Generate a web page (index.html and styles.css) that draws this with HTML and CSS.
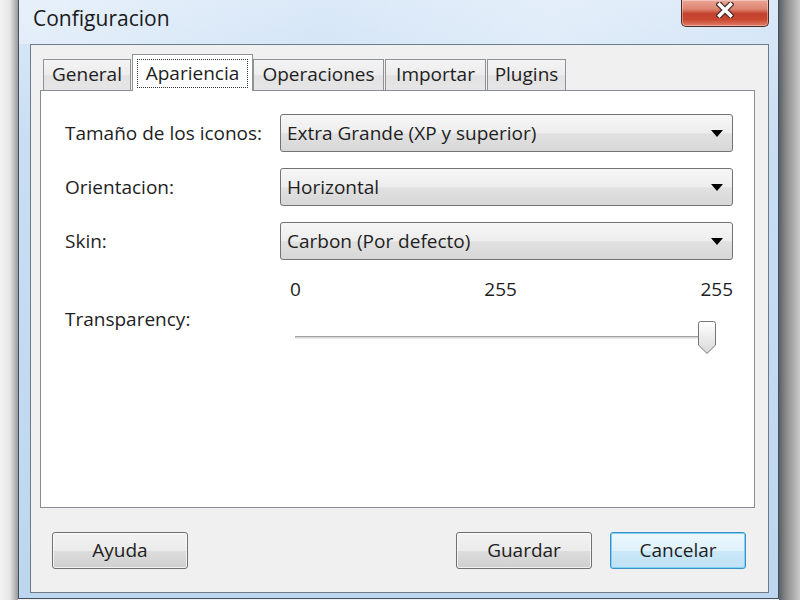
FILE: index.html
```html
<!DOCTYPE html>
<html lang="es">

<head>
	<meta charset="UTF-8" />
	<meta name="viewport" content="width=device-width, initial-scale=1.0" />
	<title>Configuracion</title>
	<link rel="stylesheet" href="styles.css">
</head>

<body>
	<div class="screen">
		<div class="shade-left"></div>

		<div class="window">
			<div class="titlebar">
				<span class="title">Configuracion</span>
				<div class="close">
					<svg width="18" height="16" viewBox="0 0 18 16">
						<path d="M3.5 2.5 L14.5 13.5 M14.5 2.5 L3.5 13.5" stroke="#4a2f2c" stroke-width="6" stroke-linecap="square" />
						<path d="M3.5 2.5 L14.5 13.5 M14.5 2.5 L3.5 13.5" stroke="#ffffff" stroke-width="3.4" stroke-linecap="square" />
					</svg>
				</div>
			</div>

			<div class="client">
				<!-- tabs -->
				<div class="tab-row">
					<div class="tab t-general">General</div>
					<div class="tab active t-apariencia"><span class="focus">Apariencia</span></div>
					<div class="tab t-operaciones">Operaciones</div>
					<div class="tab t-importar">Importar</div>
					<div class="tab t-plugins">Plugins</div>
				</div>

				<div class="panel">
					<div class="form">
						<div class="label">Tamaño de los iconos:</div>
						<div class="combo"><span>Extra Grande (XP y superior)</span><i class="arrow"></i></div>

						<div class="label">Orientacion:</div>
						<div class="combo"><span>Horizontal</span><i class="arrow"></i></div>

						<div class="label">Skin:</div>
						<div class="combo"><span>Carbon (Por defecto)</span><i class="arrow"></i></div>
					</div>

					<div class="slider-block">
						<div></div>
						<div class="ticks">
							<span>0</span>
							<span>255</span>
							<span>255</span>
						</div>
						<div class="label slider-label">Transparency:</div>
						<div class="slider">
							<div class="track"></div>
							<svg class="thumb" width="20" height="35" viewBox="0 0 20 35">
								<defs>
									<linearGradient id="thumbFill" x1="0" y1="0" x2="0" y2="1">
										<stop offset="0" stop-color="#ffffff" />
										<stop offset="1" stop-color="#d9d9d9" />
									</linearGradient>
								</defs>
								<path d="M1.5 3.5 Q1.5 1.5 3.5 1.5 H16.5 Q18.5 1.5 18.5 3.5 V25 L10 33.5 L1.5 25 Z" fill="url(#thumbFill)" stroke="#767676" />
							</svg>
						</div>
					</div>
				</div>

				<!-- buttons -->
				<div class="actions">
					<div class="btn">Ayuda</div>
					<div class="btn push">Guardar</div>
					<div class="btn default">Cancelar</div>
				</div>
			</div>
		</div>

		<div class="shade-right"></div>
	</div>
</body>

</html>
```

FILE: styles.css
```css
* {
	box-sizing: border-box;
}

body {
	margin: 0;
	width: 800px;
	height: 600px;
	overflow: hidden;
	font-family: "Open Sans", "Noto Sans", sans-serif;
	font-size: 19px;
	color: #1e1e1e;
}

.screen {
	display: flex;
	height: 600px;
	background: #f0f0f0;
}

.shade-left {
	width: 18px;
	background: linear-gradient(to right, #f4f4f4, #e6e6e6 55%, #9a9a9a);
}

.shade-right {
	flex: 1;
	background: linear-gradient(to right, #5a6067, #8c8c8c 35%, #cacaca);
}

/* glass frame */
.window {
	width: 761px;
	height: 599px;
	border: 1px solid #44505c;
	border-top: none;
	background: linear-gradient(#dbe9f8, #c9def3 140px, #bdd6ef);
	display: flex;
	flex-direction: column;
}

.titlebar {
	height: 44px;
	display: flex;
	justify-content: space-between;
	align-items: flex-start;
	padding: 0 9px 0 14px;
	background: linear-gradient(100deg, rgba(255,255,255,0.35), rgba(255,255,255,0) 40%, rgba(255,255,255,0.25) 70%, rgba(255,255,255,0));
}

.title {
	margin-top: 4px;
	font-size: 21px;
	line-height: 28px;
	color: #1a1a1a;
}

.close {
	width: 88px;
	height: 27px;
	border: 1px solid #4d2b26;
	border-top: none;
	border-radius: 0 0 5px 5px;
	background: linear-gradient(#eaa596, #dc8571 35%, #c4432f 52%, #c9472f 75%, #e07d66);
	box-shadow: inset 0 0 0 1px rgba(255,255,255,0.35);
	display: flex;
	justify-content: center;
	padding-top: 2px;
}

.client {
	flex: 1;
	margin: 0 9px 5px 11px;
	border: 1px solid #6d7b89;
	background: #f0f0f0;
	padding: 9px 13px 0 9px;
}

/* tabs */
.tab-row {
	height: 36px;
	display: flex;
	align-items: flex-end;
	padding-left: 3px;
}

.tab {
	height: 31px;
	border: 1px solid #8e9196;
	border-bottom: none;
	background: linear-gradient(#f4f4f4, #ececec 50%, #e2e2e2 52%, #e6e6e6);
	text-align: center;
	line-height: 29px;
}

.tab + .tab {
	margin-left: 1px;
}

.active + .tab {
	margin-left: 0;
}

.tab.active {
	height: 37px;
	margin-bottom: -1px;
	position: relative;
	z-index: 1;
	background: #ffffff;
	padding: 4px 4px 3px 4px;
}

.focus {
	display: block;
	height: 29px;
	border: 1px dotted #333333;
	line-height: 26px;
}

.t-general { width: 88px; }
.t-apariencia { width: 121px; }
.t-operaciones { width: 131px; }
.t-importar { width: 101px; }
.t-plugins { width: 79px; }

.panel {
	height: 418px;
	border: 1px solid #898c95;
	background: #ffffff;
	padding: 23px 21px 0 24px;
}

.form {
	display: grid;
	grid-template-columns: 215px 1fr;
	row-gap: 16px;
	align-items: center;
}

.label {
	line-height: 24px;
}

.combo {
	height: 38px;
	border: 1px solid #737373;
	border-radius: 3px;
	background: linear-gradient(#f6f6f6, #ededed 50%, #e1e1e1 52%, #d7d7d7);
	display: flex;
	align-items: center;
	justify-content: space-between;
	padding: 0 9px 0 6px;
}

.arrow {
	width: 0;
	height: 0;
	border-left: 6.5px solid transparent;
	border-right: 6.5px solid transparent;
	border-top: 7px solid #000000;
}

/* slider */
.slider-block {
	margin-top: 17px;
	display: grid;
	grid-template-columns: 215px 1fr;
	align-items: start;
}

.ticks {
	display: flex;
	justify-content: space-between;
	padding-left: 10px;
	line-height: 24px;
}

.slider-label {
	margin-top: 6px;
}

.slider {
	margin-top: 19px;
	display: flex;
	align-items: center;
	padding: 0 16px 0 15px;
}

.track {
	flex: 1;
	height: 3px;
	border-top: 1px solid #a2a2a2;
	border-bottom: 1px solid #ececec;
	background: #d6d6d6;
}

.thumb {
	margin-left: -10px;
	position: relative;
	z-index: 1;
}

/* buttons */
.actions {
	display: flex;
	margin-top: 24px;
	padding: 0 9px 0 12px;
}

.btn {
	width: 136px;
	height: 37px;
	border: 1px solid #707070;
	border-radius: 3px;
	background: linear-gradient(#f2f2f2, #ebebeb 50%, #dddddd 52%, #cfcfcf);
	box-shadow: inset 0 0 0 1px rgba(255,255,255,0.7);
	text-align: center;
	line-height: 34px;
}

.push {
	margin-left: auto;
	margin-right: 18px;
}

.btn.default {
	border-color: #3c8fc4;
	background: linear-gradient(#eef8fd, #dff1fb 50%, #cbe8f7 52%, #bfe2f5);
	box-shadow: inset 0 0 0 1px #7fd2f6;
}
```
